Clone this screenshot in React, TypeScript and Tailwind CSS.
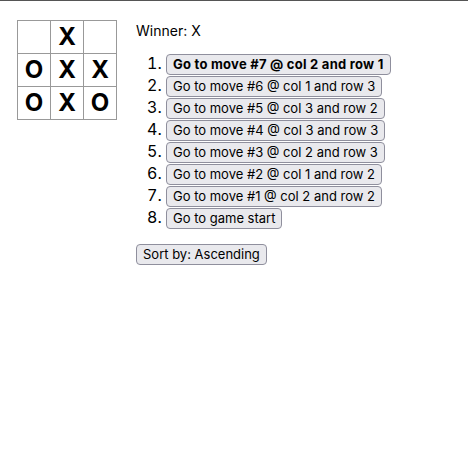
import React from 'react';

const board = ['', 'X', '', 'O', 'X', 'X', 'O', 'X', 'O'];

const moves = [
  'Go to move #7 @ col 2 and row 1',
  'Go to move #6 @ col 1 and row 3',
  'Go to move #5 @ col 3 and row 2',
  'Go to move #4 @ col 3 and row 3',
  'Go to move #3 @ col 2 and row 3',
  'Go to move #2 @ col 1 and row 2',
  'Go to move #1 @ col 2 and row 2',
  'Go to game start',
];

const btn =
  'bg-[#e9e9ed] border border-[#8f8f9d] rounded-[4px] px-[6px] h-[21px] text-[13px] leading-[19px] text-black align-middle';

export default function App() {
  return (
    <div className="min-h-screen bg-white border-t border-[#555] font-['Inter',sans-serif] text-black">
      <div className="flex pl-[17px] pt-[19px]">
        <div className="flex flex-col">
          {[0, 1, 2].map((r) => (
            <div key={r} className="flex -mt-px first:mt-0">
              {[0, 1, 2].map((c) => (
                <div
                  key={c}
                  className="w-[34px] h-[34px] -mr-px border border-[#999] bg-white flex items-center justify-center text-[24px] font-bold leading-none"
                >
                  {board[r * 3 + c]}
                </div>
              ))}
            </div>
          ))}
        </div>
        <div className="ml-[20px]">
          <div className="text-[14px] leading-[22px]">Winner: X</div>
          <ol className="list-decimal pl-[30px] mt-[10px] mb-[13px] text-[16px]">
            {moves.map((m, i) => (
              <li key={i} className="h-[22px] leading-[22px]">
                <button className={`${btn} ${i === 0 ? 'font-bold tracking-[0.25px]' : ''}`}>{m}</button>
              </li>
            ))}
          </ol>
          <button className={btn}>Sort by: Ascending</button>
        </div>
      </div>
    </div>
  );
}
